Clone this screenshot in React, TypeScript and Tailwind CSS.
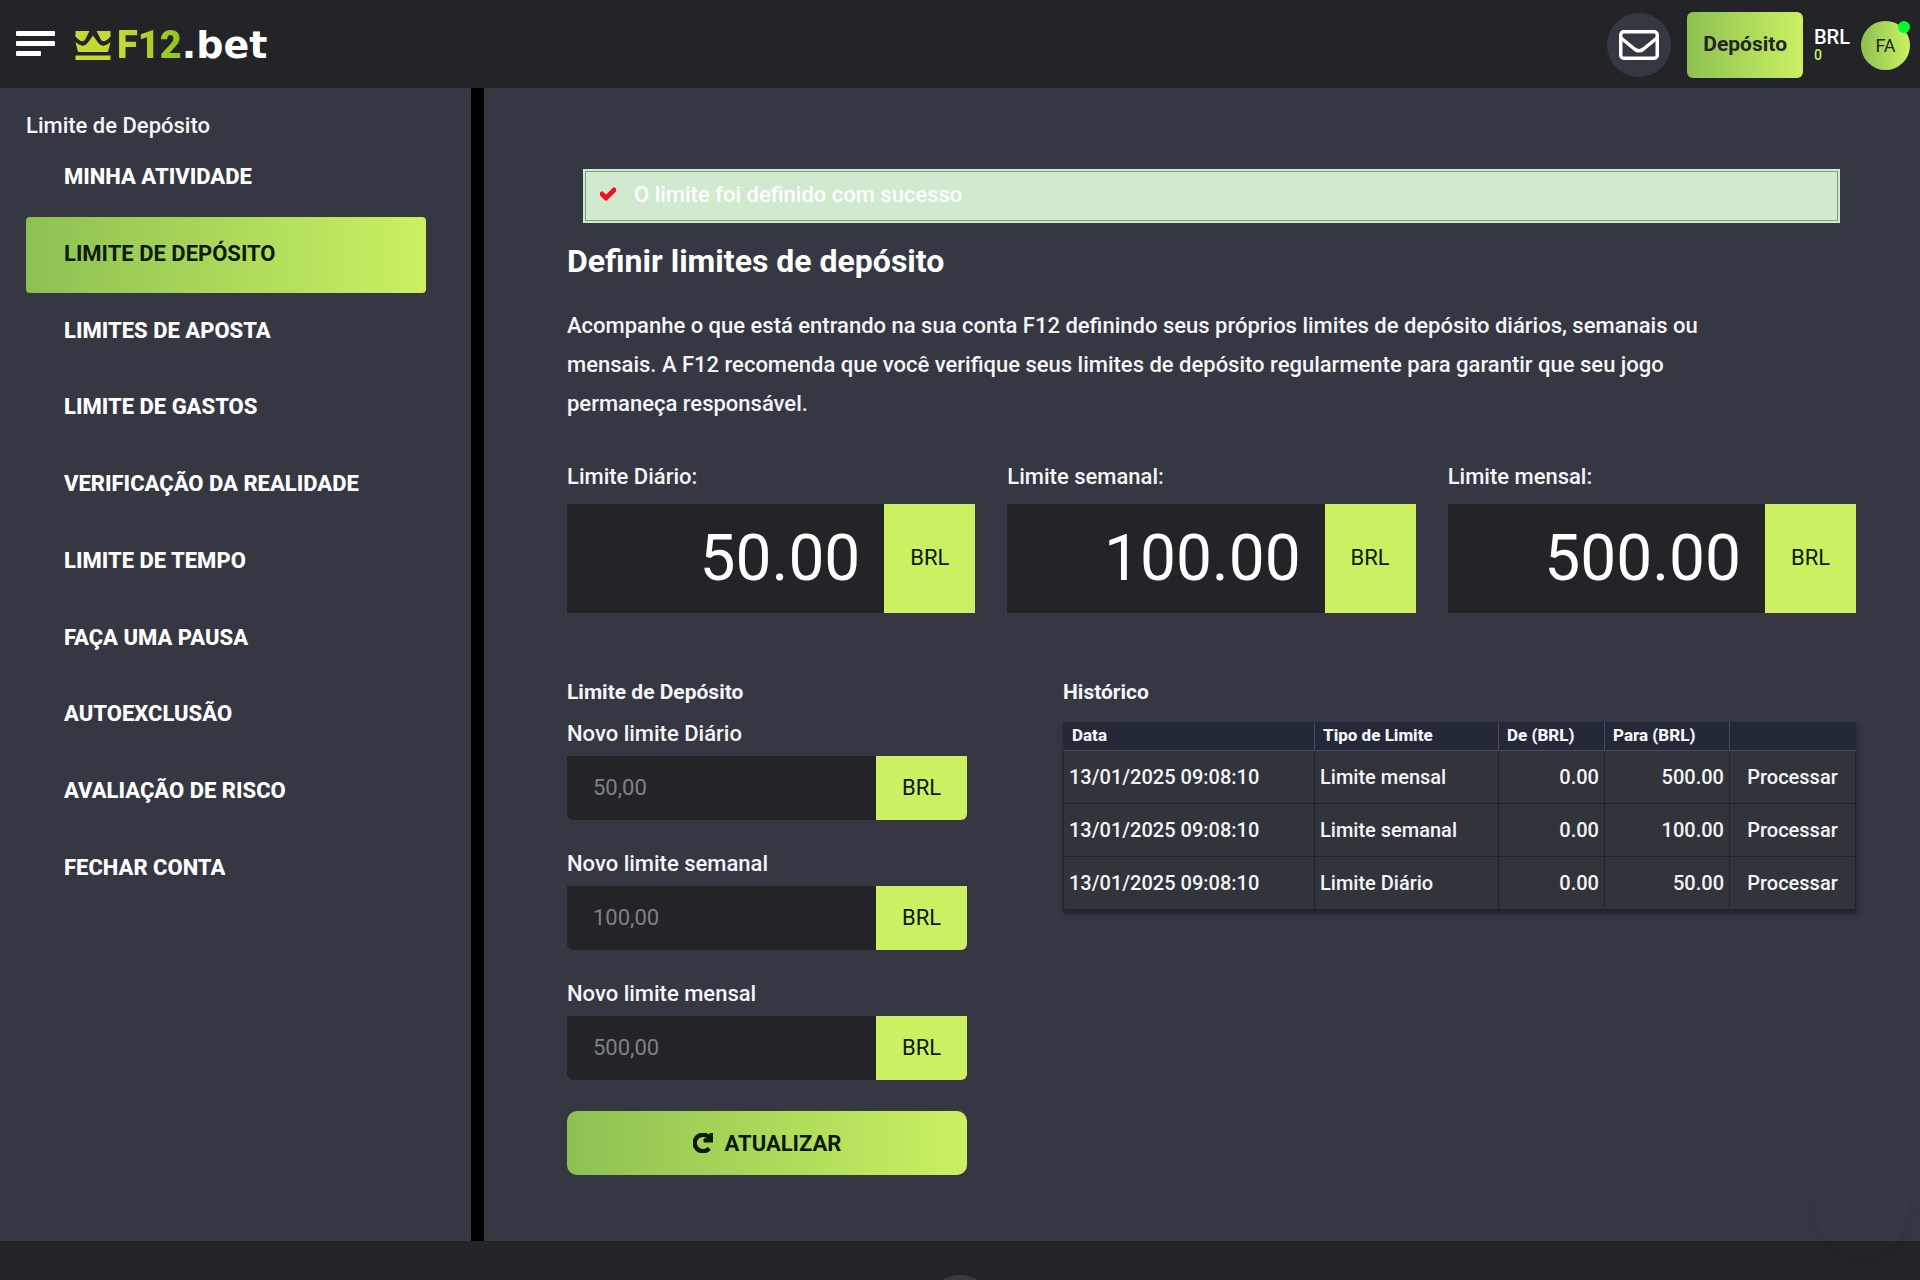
import * as React from 'react';
import { FaCheck, FaRedo } from 'react-icons/fa';

const menuItems = [
  'Minha atividade',
  'Limite de depósito',
  'Limites de aposta',
  'Limite de gastos',
  'Verificação da realidade',
  'Limite de tempo',
  'Faça uma pausa',
  'Autoexclusão',
  'Avaliação de risco',
  'Fechar conta',
];

const currentLimits = [
  { id: 'daily', label: 'Limite Diário:', value: '50.00' },
  { id: 'weekly', label: 'Limite semanal:', value: '100.00' },
  { id: 'monthly', label: 'Limite mensal:', value: '500.00' },
];

const newLimits = [
  { id: 'new-daily', label: 'Novo limite Diário', placeholder: '50,00' },
  { id: 'new-weekly', label: 'Novo limite semanal', placeholder: '100,00' },
  { id: 'new-monthly', label: 'Novo limite mensal', placeholder: '500,00' },
];

const history = [
  { date: '13/01/2025 09:08:10', type: 'Limite mensal', from: '0.00', to: '500.00' },
  { date: '13/01/2025 09:08:10', type: 'Limite semanal', from: '0.00', to: '100.00' },
  { date: '13/01/2025 09:08:10', type: 'Limite Diário', from: '0.00', to: '50.00' },
];

function Logo() {
  return (
    <a href="#" className="flex items-center" aria-label="F12.bet">
      <svg viewBox="0 0 36 30" className="w-9 h-[30px] mr-[6px]" fill="#c5d836">
        <path d="M0.500 1H14.500L10.500 9Q9 12 6 11Q3 10 0.500 6.500Z" />
        <path d="M35.500 1H21.500L25.500 9Q27 12 30 11Q33 10 35.500 6.500Z" />
        <path d="M18 5.500L23 12.500Q26 16.500 29.500 15.500Q33 14.500 35.500 12L33 22H3L0.500 12Q3 14.500 6.500 15.500Q10 16.500 13 12.500Z" />
        <path d="M0.500 25.500h35V30h-35z" />
      </svg>
      <span className="font-['Roboto',sans-serif] font-black text-[38px] leading-none bg-linear-to-r from-[#c8d936] to-[#8fc31f] bg-clip-text text-transparent">
        F12
      </span>
      <span className="font-['DejaVu_Sans',sans-serif] font-bold text-[38px] leading-none text-white">.bet</span>
    </a>
  );
}

function Header() {
  return (
    <header className="h-[88px] shrink-0 bg-[#232427] flex items-center justify-between pl-4 pr-[10px] pt-[2px]">
      <div className="flex items-center gap-5">
        <button aria-label="Menu" className="flex flex-col gap-[5px] pb-[3px]">
          <span className="w-[39px] h-[5px] rounded-[1px] bg-white" />
          <span className="w-[39px] h-[5px] rounded-[1px] bg-white" />
          <span className="w-[25px] h-[5px] rounded-[1px] bg-white" />
        </button>
        <Logo />
      </div>
      <div className="flex items-center">
        <button aria-label="Mensagens" className="size-16 rounded-full bg-[#353743] flex items-center justify-center mr-4">
          <svg viewBox="0 0 40 30" className="w-10 h-[30px]" fill="none" stroke="#fff" strokeWidth="3.500" strokeLinejoin="round">
            <rect x="1.750" y="1.750" width="36.500" height="26.500" rx="3" />
            <path d="M2 8L15.500 19Q20 22.500 24.500 19L38 8" />
          </svg>
        </button>
        <button className="h-[66px] px-4 rounded-[6px] bg-linear-to-r from-[#8cc152] to-[#cbf162] text-[#232427] font-bold text-[21px]">
          Depósito
        </button>
        <div className="mx-[11px] flex flex-col">
          <span className="text-[20px] leading-5 font-medium text-white">BRL</span>
          <span className="text-[14px] leading-4 font-medium text-[#cbf162]">0</span>
        </div>
        <button className="relative size-[49px] rounded-full bg-linear-to-r from-[#8cc152] to-[#cbf162] text-[#232427] text-[18px]">
          FA
          <span className="absolute top-0 right-0 size-3 rounded-full bg-[#00fc32]" />
        </button>
      </div>
    </header>
  );
}

function Sidebar() {
  return (
    <aside className="w-[484px] shrink-0 border-r-[13px] border-black pl-[26px] pr-[45px] pt-6">
      <h2 className="text-[22px] leading-7 font-medium">Limite de Depósito</h2>
      <nav className="flex flex-col h-[767px]">
        {menuItems.map((item, i) => (
          <a
            key={item}
            href="#"
            className={
              i === 1
                ? 'flex-1 flex items-center pb-[3px] pl-[38px] rounded-[4px] uppercase font-bold text-[22px] text-[#0d1a05] bg-linear-to-r from-[#8cc152] to-[#cbf162]'
                : 'flex-1 flex items-center pb-[3px] pl-[38px] uppercase font-extrabold text-[22px] text-white'
            }
          >
            {item}
          </a>
        ))}
      </nav>
    </aside>
  );
}

function CurrentLimits() {
  return (
    <div className="mt-10 grid grid-cols-3 gap-8">
      {currentLimits.map((limit) => (
        <div key={limit.id}>
          <label htmlFor={limit.id} className="block text-[22px] leading-7 font-medium">{limit.label}</label>
          <div className="mt-[13px] flex h-[109px]">
            <input
              id={limit.id}
              readOnly
              defaultValue={limit.value}
              className="min-w-0 flex-1 bg-[#232427] pr-6 text-right text-[64px] text-white outline-none"
            />
            <span className="w-[91px] bg-[#cbf162] text-[#0d1a05] text-[22px] flex items-center justify-center pb-[2px]">BRL</span>
          </div>
        </div>
      ))}
    </div>
  );
}

function LimitForm() {
  return (
    <form className="w-[400px] shrink-0" onSubmit={(e) => e.preventDefault()}>
      <h3 className="text-[21px] leading-7 font-bold">Limite de Depósito</h3>
      <div className="mt-[14px] flex flex-col gap-[30px]">
        {newLimits.map((limit) => (
          <div key={limit.id}>
            <label htmlFor={limit.id} className="block text-[22px] leading-7 font-medium">{limit.label}</label>
            <div className="mt-2 flex h-16 rounded-b-[6px] overflow-hidden">
              <input
                id={limit.id}
                placeholder={limit.placeholder}
                className="min-w-0 flex-1 bg-[#232427] pl-[26px] pb-[2px] text-[22px] text-white placeholder:text-[#808183] outline-none"
              />
              <span className="w-[91px] bg-[#cbf162] text-[#0d1a05] text-[22px] flex items-center justify-center pb-[2px]">BRL</span>
            </div>
          </div>
        ))}
      </div>
      <button
        type="submit"
        className="mt-[31px] w-full h-16 rounded-[10px] bg-linear-to-r from-[#8cc152] to-[#cbf162] text-[#0d1a05] text-[22px] font-bold flex items-center justify-center gap-3"
      >
        <FaRedo className="size-5" stroke="currentColor" strokeWidth={40} />
        ATUALIZAR
      </button>
    </form>
  );
}

function History() {
  return (
    <section className="min-w-0 flex-1">
      <h3 className="text-[21px] leading-7 font-bold">Histórico</h3>
      <table className="mt-4 w-full table-fixed border-collapse bg-[#31343b] shadow-[1px_4px_5px_rgba(0,0,0,0.35)]">
        <colgroup>
          <col className="w-[251px]" />
          <col className="w-[184px]" />
          <col className="w-[106px]" />
          <col className="w-[125px]" />
          <col />
        </colgroup>
        <thead>
          <tr className="h-7 bg-[#232936] text-left text-[17px] leading-6">
            <th className="border border-[#474c58] border-t-[#232936] border-l-[#232936] px-2 pb-[3px] font-extrabold">Data</th>
            <th className="border border-[#474c58] border-t-[#232936] px-2 pb-[3px] font-extrabold">Tipo de Limite</th>
            <th className="border border-[#474c58] border-t-[#232936] px-2 pb-[3px] font-extrabold">De (BRL)</th>
            <th className="border border-[#474c58] border-t-[#232936] px-2 pb-[3px] font-extrabold">Para (BRL)</th>
            <th className="border border-[#474c58] border-t-[#232936] border-r-[#232936]" />
          </tr>
        </thead>
        <tbody>
          {history.map((row) => (
            <tr key={row.type} className="h-[53px] text-[20px] font-medium">
              <td className="border border-[#20242d] px-[5px]">{row.date}</td>
              <td className="border border-[#20242d] px-[5px]">{row.type}</td>
              <td className="border border-[#20242d] px-[5px] text-right">{row.from}</td>
              <td className="border border-[#20242d] px-[5px] text-right">{row.to}</td>
              <td className="border border-[#20242d] text-center">
                <button>Processar</button>
              </td>
            </tr>
          ))}
        </tbody>
      </table>
    </section>
  );
}

export default function App() {
  return (
    <div className="h-screen overflow-hidden flex flex-col bg-[#353743] text-[#f4f5f7] font-['Roboto',sans-serif]">
      <Header />
      <div className="flex flex-1 min-h-0">
        <Sidebar />
        <main className="min-w-0 flex-1 pl-[83px] pr-16 pt-[83px]">
          <div role="status" className="mx-[18px] h-[50px] px-[14px] pb-1 flex items-center border border-[#74a572] ring-2 ring-[#d2e9d0] bg-[#d0e9cf] text-white text-[22px] font-medium">
            <FaCheck className="size-4 mr-[18px] text-[#fb0d1b]" stroke="currentColor" strokeWidth={50} />
            O limite foi definido com sucesso
          </div>
          <h1 className="mt-5 text-[32px] leading-10 font-bold text-white">Definir limites de depósito</h1>
          <p className="mt-[25px] pr-30 text-[22px] leading-[39px] font-medium">
            Acompanhe o que está entrando na sua conta F12 definindo seus próprios limites de depósito diários, semanais ou
            mensais. A F12 recomenda que você verifique seus limites de depósito regularmente para garantir que seu jogo
            permaneça responsável.
          </p>
          <CurrentLimits />
          <div className="mt-[65px] flex gap-24">
            <LimitForm />
            <History />
          </div>
        </main>
      </div>
      <footer className="h-[39px] shrink-0 overflow-hidden bg-[#232427] flex justify-center pt-[34px]">
        <span className="size-[70px] shrink-0 rounded-full bg-[#3a393c]" />
      </footer>
      <span className="fixed right-[10px] bottom-6 size-24 rounded-full shadow-[0_4px_8px_rgba(0,0,0,0.08)]" />
    </div>
  );
}
